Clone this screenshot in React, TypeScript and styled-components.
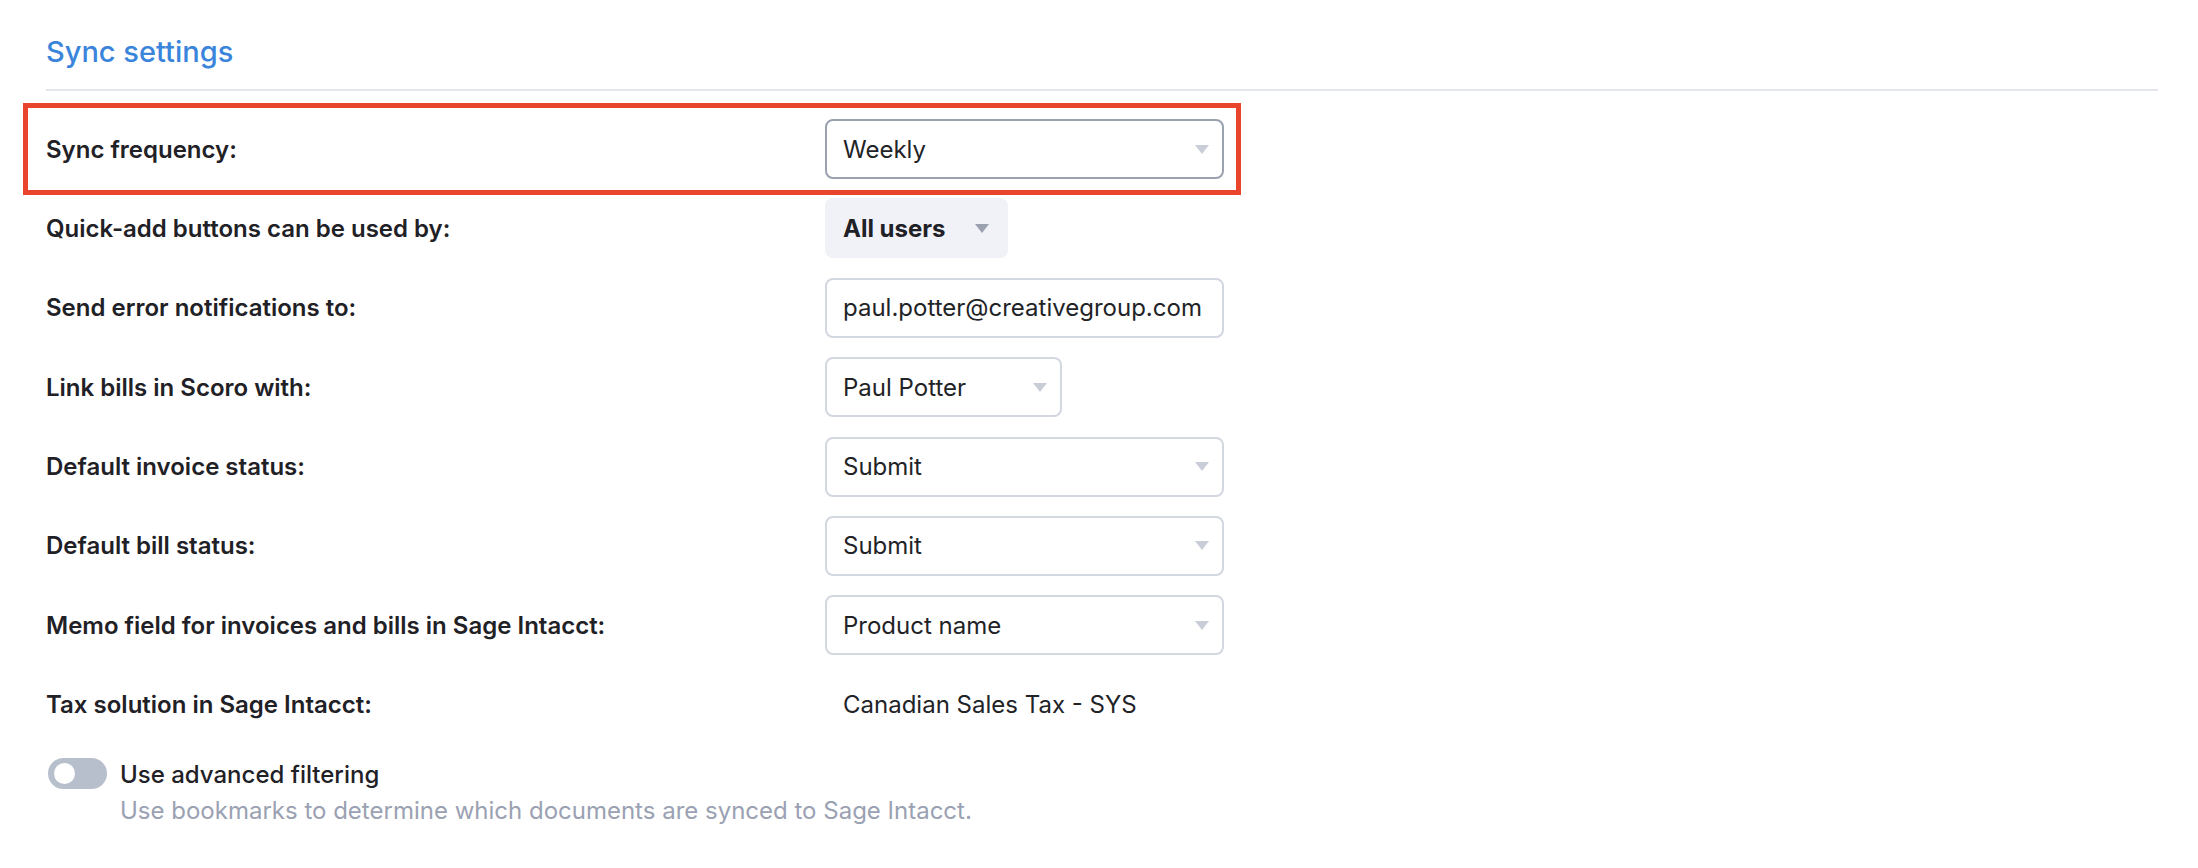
import React from "react";
import styled, { createGlobalStyle } from "styled-components";

const GlobalStyle = createGlobalStyle`
  html, body {
    margin: 0;
    padding: 0;
    background: #ffffff;
  }
  body {
    font-family: Inter, "Noto Sans", sans-serif;
    color: #1f2126;
  }
`;

// settings data
const rows = [
  { label: "Quick-add buttons can be used by:", kind: "quick", value: "All users" },
  { label: "Send error notifications to:", kind: "input", value: "paul.potter@creativegroup.com" },
  { label: "Link bills in Scoro with:", kind: "select", value: "Paul Potter", width: 237 },
  { label: "Default invoice status:", kind: "select", value: "Submit" },
  { label: "Default bill status:", kind: "select", value: "Submit" },
  { label: "Memo field for invoices and bills in Sage Intacct:", kind: "select", value: "Product name" },
  { label: "Tax solution in Sage Intacct:", kind: "static", value: "Canadian Sales Tax - SYS" },
];

export default function App() {
  return (
    <>
      <GlobalStyle />
      <Page>
        <Title>Sync settings</Title>
        <Form>
          <Highlight>
            <Row>
              <Label>Sync frequency:</Label>
              <SelectBox $active>
                Weekly
                <Caret />
              </SelectBox>
            </Row>
          </Highlight>
          {rows.map((r) => (
            <Row key={r.label}>
              <Label>{r.label}</Label>
              <Control kind={r.kind} value={r.value} width={r.width} />
            </Row>
          ))}
        </Form>
        <ToggleRow>
          <Toggle>
            <Knob />
          </Toggle>
          <ToggleText>
            <ToggleLabel>Use advanced filtering</ToggleLabel>
            <ToggleHint>Use bookmarks to determine which documents are synced to Sage Intacct.</ToggleHint>
          </ToggleText>
        </ToggleRow>
      </Page>
    </>
  );
}

const Control = ({ kind, value, width }: { kind: string; value: string; width?: number }) => {
  if (kind === "quick") {
    return (
      <QuickButton>
        {value}
        <Caret $dark />
      </QuickButton>
    );
  }
  if (kind === "input") return <TextInput>{value}</TextInput>;
  if (kind === "static") return <StaticValue>{value}</StaticValue>;
  return (
    <SelectBox $width={width}>
      {value}
      <Caret />
    </SelectBox>
  );
};

const Page = styled.div`
  padding: 34px 40px 40px 46px;
`;

const Title = styled.h2`
  margin: 0;
  padding-bottom: 19px;
  border-bottom: 2px solid #e3e6ed;
  font-size: 29px;
  line-height: 36px;
  font-weight: 500;
  color: #3a85db;
`;

const Form = styled.div`
  display: flex;
  flex-direction: column;
  gap: 19.4px;
  margin-top: 28px;
`;

// red annotation frame round the first row
const Highlight = styled.div`
  align-self: flex-start;
  margin: -16px 0 -16px -23px;
  padding: 11px 12px 11px 18px;
  border: 5px solid #e9452c;
`;

const Row = styled.div`
  display: grid;
  grid-template-columns: 779px auto;
  align-items: center;
  justify-items: start;
  min-height: 60px;
`;

const Label = styled.div`
  font-size: 24px;
  font-weight: 600;
  color: #1f2126;
`;

const SelectBox = styled.div<{ $width?: number; $active?: boolean }>`
  box-sizing: border-box;
  width: ${(p) => p.$width ?? 399}px;
  height: 60px;
  display: flex;
  align-items: center;
  justify-content: space-between;
  padding: 0 13px 0 16px;
  border: 2px solid ${(p) => (p.$active ? "#9aa1af" : "#d3d7e0")};
  border-radius: 8px;
  font-size: 24px;
  color: #222327;
  background: #fff;
`;

const TextInput = styled.div`
  box-sizing: border-box;
  width: 399px;
  height: 60px;
  display: flex;
  align-items: center;
  padding: 0 13px 0 16px;
  border: 2px solid #d3d7e0;
  border-radius: 8px;
  font-size: 24px;
  color: #222327;
`;

const QuickButton = styled.div`
  box-sizing: border-box;
  height: 60px;
  display: flex;
  align-items: center;
  gap: 29px;
  padding: 0 19px 0 18px;
  border-radius: 8px;
  background: #f0f2f7;
  font-size: 24px;
  font-weight: 700;
  color: #1f2126;
`;

const StaticValue = styled.div`
  padding-left: 18px;
  font-size: 24px;
  color: #222327;
`;

const Caret = styled.span<{ $dark?: boolean }>`
  width: 0;
  height: 0;
  border-left: 7px solid transparent;
  border-right: 7px solid transparent;
  border-top: 9px solid ${(p) => (p.$dark ? "#9ba1ae" : "#c9cdd7")};
`;

const ToggleRow = styled.div`
  display: flex;
  align-items: flex-start;
  gap: 13px;
  margin-top: 22px;
  padding-left: 2px;
`;

const Toggle = styled.div`
  position: relative;
  flex: none;
  width: 59px;
  height: 31px;
  margin-top: 1.5px;
  border-radius: 16px;
  background: #b8bfcc;
`;

const Knob = styled.span`
  position: absolute;
  left: 6px;
  top: 5px;
  width: 21px;
  height: 21px;
  border-radius: 50%;
  background: #fff;
`;

const ToggleText = styled.div`
  display: flex;
  flex-direction: column;
  font-size: 24px;
  line-height: 36px;
`;

const ToggleLabel = styled.div`
  font-weight: 500;
  color: #1f2126;
`;

const ToggleHint = styled.div`
  color: #9aa1b2;
`;
